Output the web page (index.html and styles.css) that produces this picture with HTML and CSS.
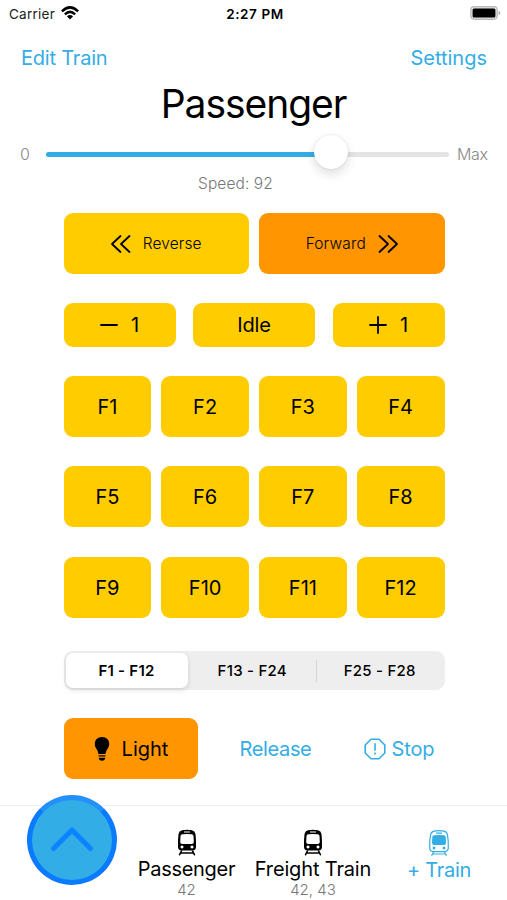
FILE: index.html
```html
<!DOCTYPE html>
<html lang="en">
<head>
<meta charset="utf-8">
<title>Train Control</title>
<link rel="stylesheet" href="styles.css">
</head>
<body>
<svg class="defs" aria-hidden="true">
  <symbol id="tram" viewBox="0 0 20 27">
    <path fill="currentColor" fill-rule="evenodd" d="M5 1.200Q10 .2 15 1.200Q18 1.900 18.500 5Q19.200 11 19 18Q18.800 21.400 15.800 21.600H4.200Q1.200 21.400 1 18Q.8 11 1.500 5Q2 1.900 5 1.200ZM7 2.400V3.500H13V2.400ZM5.300 5.200Q3.700 5.400 3.500 7L3.200 13Q3.200 14.700 4.800 14.900Q10 15.300 15.200 14.900Q16.800 14.700 16.800 13L16.500 7Q16.300 5.400 14.700 5.200Q10 4.800 5.300 5.200ZM5 16.600a1.500 1.500 0 1 0 .01 0ZM15 16.600a1.500 1.500 0 1 0 .01 0Z"/>
    <path fill="none" stroke="currentColor" stroke-width="1.600" stroke-linecap="round" d="M4.400 22L2.600 25.700M15.600 22L17.400 25.700M4 24H16"/>
  </symbol>
</svg>
<main class="app">
  <header class="status">
    <div class="carrier"><span>Carrier</span>
      <svg class="wifi" viewBox="0 0 18 14"><g fill="none" stroke="#000" stroke-width="2.500"><path d="M.9 5.300Q9-2.600 17.100 5.300"/><path d="M3.900 8.300Q9 3.500 14.100 8.300"/></g><path d="M9 13.500L5.900 10.300Q9 7.800 12.100 10.300Z"/></svg>
    </div>
    <time class="clock">2:27 PM</time>
    <svg class="battery" viewBox="0 0 31 14"><rect x=".7" y=".7" width="26.600" height="12.600" rx="3.500" fill="#ddd" stroke="#bbb" stroke-width="1.200"/><rect x="2.600" y="2.600" width="22.800" height="8.800" rx="1.500"/><path d="M28.700 4.700Q30.400 5.400 30.400 7T28.700 9.300Z" fill="#aaa"/></svg>
  </header>
  <nav class="nav"><a class="edit">Edit Train</a><a class="settings">Settings</a></nav>
  <h1 class="title">Passenger</h1>
  <section class="slider"><span class="min">0</span><div class="track"><div class="fill"></div><div class="knob"></div></div><span class="max">Max</span></section>
  <p class="speed">Speed: 92</p>

  <section class="controls">
    <div class="row direction">
      <button class="key small"><svg class="chevrons" viewBox="0 0 20 18"><path d="M9.500 1L1 9L9.500 17M18.500 1L10 9L18.500 17"/></svg><span class="reverse">Reverse</span></button>
      <button class="key small active"><span class="forward">Forward</span><svg class="chevrons" viewBox="0 0 20 18"><path d="M1.500 1L10 9L1.500 17M10.500 1L19 9L10.500 17"/></svg></button>
    </div>
    <div class="row steps">
      <button class="key"><svg class="sign" viewBox="0 0 18 18"><path d="M1 9H17"/></svg><span>1</span></button>
      <button class="key"><span class="idle">Idle</span></button>
      <button class="key"><svg class="sign" viewBox="0 0 18 18"><path d="M1 9H17M9 1V17"/></svg><span>1</span></button>
    </div>
    <div class="functions">
      <button class="key">F1</button><button class="key">F2</button><button class="key">F3</button><button class="key">F4</button>
      <button class="key">F5</button><button class="key">F6</button><button class="key">F7</button><button class="key">F8</button>
      <button class="key">F9</button><button class="key">F10</button><button class="key">F11</button><button class="key">F12</button>
    </div>
    <div class="segments"><span class="segment selected">F1 - F12</span><span class="segment">F13 - F24</span><span class="segment last">F25 - F28</span></div>
    <div class="actions">
      <button class="key active light"><svg class="bulb" viewBox="0 0 16 24"><path d="M8 0C12.500 0 15.200 3 15.200 7C15.200 11.500 11.800 12.600 11.600 17H4.400C4.200 12.600.8 11.500.8 7C.8 3 3.500 0 8 0ZM4.500 18.200H11.500V19.600H4.500ZM4.700 20.700H11.300Q11 23.700 8 23.700T4.700 20.700Z"/></svg><span>Light</span></button>
      <a class="release">Release</a>
      <a class="stop"><svg class="octagon" viewBox="0 0 22 22"><path d="M7 1.200H15L20.800 7V15L15 20.800H7L1.200 15V7ZM11 5.700V12.200M11 15V16"/></svg><span>Stop</span></a>
    </div>
  </section>

  <footer class="dock">
    <button class="up"><svg viewBox="0 0 44 26"><path d="M3.500 22.500L22 4L40.500 22.500"/></svg></button>
    <div class="train passenger"><svg class="tram"><use href="#tram"/></svg><span class="name">Passenger</span><span class="address">42</span></div>
    <div class="train freight"><svg class="tram"><use href="#tram"/></svg><span class="name">Freight Train</span><span class="address">42, 43</span></div>
    <div class="train add"><svg class="tram" viewBox="0 0 20 27"><g fill="none" stroke="currentColor" stroke-width="1.200"><path d="M5 1.200Q10 .2 15 1.200Q18 1.900 18.500 5Q19.500 11 19.300 18Q19.100 21.400 15.800 21.600H4.200Q.9 21.400.7 18Q.5 11 1.500 5Q2 1.900 5 1.200ZM7 3.200H13M4.400 22L2.600 25.700M15.600 22L17.400 25.700M4 24H16"/></g><path fill="currentColor" d="M5 5.200Q10 4.800 15 5.200Q16.500 5.500 16.700 7L17 13Q17 14.700 15.300 14.900Q10 15.300 4.700 14.900Q3 14.700 3 13L3.300 7Q3.500 5.500 5 5.200ZM5 16.600a1.400 1.400 0 1 0 .01 0ZM15 16.600a1.400 1.400 0 1 0 .01 0Z"/></svg><span class="name">+ Train</span></div>
  </footer>
</main>
</body>
</html>
```
FILE: styles.css
```css
* { box-sizing: border-box; }
body { margin: 0; background: #fff; color: #000; font-family: Inter, "Liberation Sans", sans-serif; }
.defs { display: none; }
svg { display: block; flex: none; overflow: visible; }
button { font: inherit; color: inherit; border: 0; padding: 0; }
.app { width: 507px; height: 900px; display: flex; flex-direction: column; overflow: hidden; }
.status { height: 28px; display: grid; grid-template-columns: 1fr auto 1fr; align-items: center; padding: 0 6px 0 9px; font-size: 13.500px; }
.carrier { display: flex; align-items: center; gap: 6px; color: #222; letter-spacing: .25px; }
.wifi { width: 18px; height: 14px; margin-top: -2px; }
.clock { font-weight: 600; font-size: 13.500px; letter-spacing: .6px; }
.battery { width: 31px; height: 14px; justify-self: end; margin-top: -2px; }
.nav { height: 60px; display: flex; justify-content: space-between; align-items: center; padding: 0 20px 0 21px; color: #32ade6; font-size: 20px; letter-spacing: -.2px; }
.settings { letter-spacing: 0; }
.title { height: 44px; margin: 0; line-height: 32px; font-size: 39px; font-weight: 400; text-align: center; letter-spacing: -1.050px; }
.slider { height: 44px; display: flex; align-items: center; padding: 0 20px; color: #888; font-size: 16px; font-weight: 300; }
.min { width: 26px; flex: none; }
.track { position: relative; flex: none; width: 403px; height: 5px; border-radius: 3px; background: #e4e4e5; }
.fill { width: 285px; height: 5px; border-radius: 3px; background: #32ade6; }
.knob { position: absolute; left: 268px; top: -17px; width: 34px; height: 34px; border-radius: 50%; background: #fff; box-shadow: 0 0 2px #0002, 0 5px 11px #0002; }
.max { margin-left: 8px; letter-spacing: -.4px; }
.speed { margin: 0; height: 37px; padding-left: 198px; line-height: 16px; font-size: 15.500px; font-weight: 300; color: #777; letter-spacing: .1px; }
.controls { width: 381px; margin-left: 63.500px; display: flex; flex-direction: column; }
.row { display: flex; }
.key { display: flex; align-items: center; justify-content: center; border-radius: 9px; background: #fc0; font-size: 20px; }
.active { background: #ff9500; }
.direction { gap: 10px; height: 61px; }
.direction .key { flex: 1; gap: 12px; }
.small { font-size: 15.500px; font-weight: 300; letter-spacing: .1px; }
.forward { letter-spacing: .15px; }
.chevrons { width: 20px; height: 18px; }
.chevrons path, .sign path { fill: none; stroke: #000; stroke-width: 1.800; stroke-linecap: round; stroke-linejoin: round; }
.steps { display: grid; grid-template-columns: 112px 122px 112px; justify-content: space-between; height: 44px; margin-top: 29px; }
.steps .key { gap: 13px; }
.idle { letter-spacing: -.2px; }
.sign { width: 18px; height: 18px; }
.functions { display: grid; grid-template-columns: repeat(4, 1fr); grid-auto-rows: 61px; gap: 29.500px 10px; margin-top: 28.500px; }
.functions .key { padding-top: 1px; }
.segments { display: flex; height: 39px; margin-top: 33.500px; padding: 2px; border-radius: 9px; background: #eee; font-size: 15px; font-weight: 500; letter-spacing: .25px; }
.segment { flex: 1; display: flex; align-items: center; justify-content: center; padding-left: 2px; }
.selected { flex: 0 0 122px; padding: 0; border-radius: 7px; background: #fff; font-weight: 600; box-shadow: 0 2px 5px #0002; }
.last { background: linear-gradient(#d4d4d5, #d4d4d5) 1px 50% / 1px 22px no-repeat; }
.actions { height: 61px; margin-top: 28px; display: flex; align-items: center; color: #32ade6; font-size: 20px; }
.light { width: 134px; height: 61px; gap: 12px; color: #000; }
.bulb { width: 16px; height: 24px; margin-left: 1px; }
.release { margin-left: 42px; width: 124px; letter-spacing: -.35px; }
.stop { display: flex; align-items: center; gap: 6px; letter-spacing: -.1px; }
.octagon { width: 22px; height: 22px; }
.octagon path { fill: none; stroke: currentColor; stroke-width: 1.600; stroke-linecap: round; stroke-linejoin: round; }
.dock { position: relative; height: 95px; margin-top: auto; padding: 23px 10px 0 130px; border-top: 1px solid #eee; display: grid; grid-template-columns: 113px 140px 112px; }
.up { position: absolute; left: 27px; top: -11px; width: 90px; height: 90px; border: 5px solid #0a7aff; border-top-color: #2490fa; border-radius: 50%; background: #32ade6; display: flex; align-items: center; justify-content: center; }
.up svg { width: 44px; height: 26px; margin-top: -3px; }
.up path { fill: none; stroke: #0a84ff; stroke-width: 5; stroke-linecap: round; stroke-linejoin: round; }
.train { display: flex; flex-direction: column; align-items: center; white-space: nowrap; }
.tram { width: 20px; height: 27px; }
.name { height: 24px; line-height: 26px; font-size: 20px; letter-spacing: -.3px; }
.freight .name { letter-spacing: -.15px; }
.address { font-size: 15px; line-height: 20px; font-weight: 300; color: #777; }
.add { color: #32ade6; padding-top: 1px; }
```
